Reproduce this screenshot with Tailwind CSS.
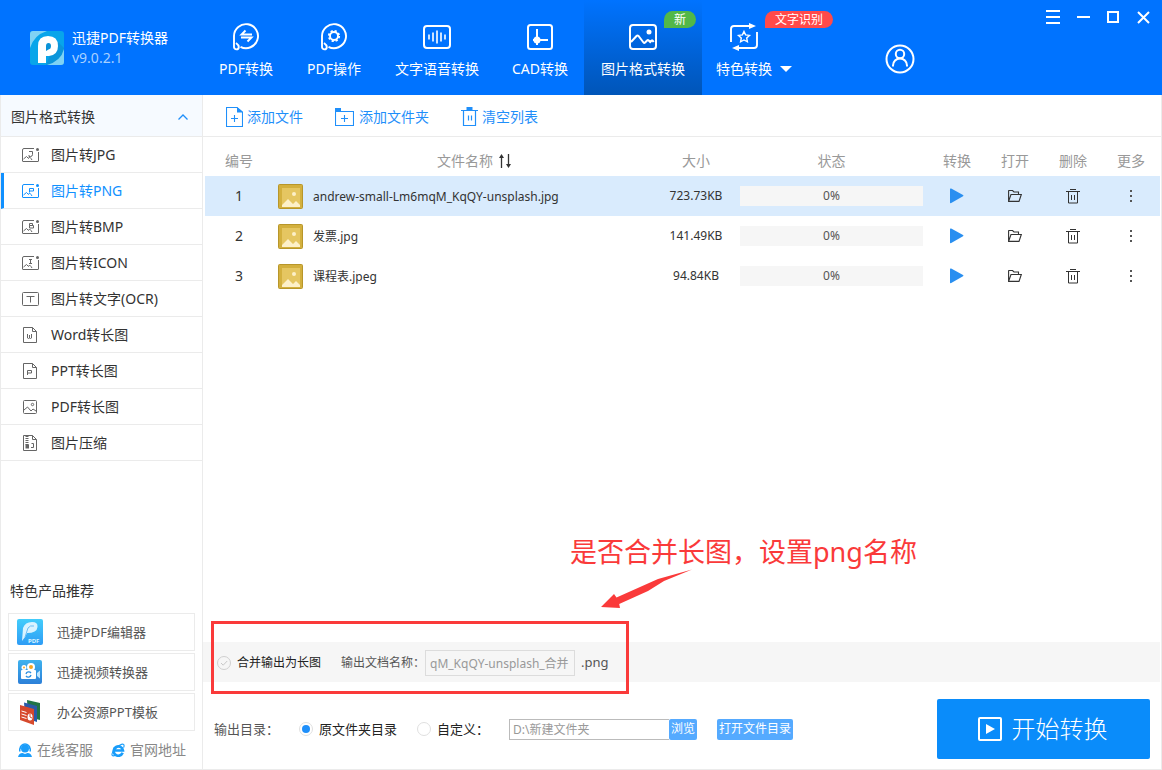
<!DOCTYPE html>
<html lang="zh-CN">
<head>
<meta charset="utf-8">
<meta name="viewport" content="width=device-width, initial-scale=1">
<title>迅捷PDF转换器</title>
<script src="https://cdn.jsdelivr.net/npm/@tailwindcss/browser@4"></script>
</head>
<body class="font-['Noto_Sans','Noto_Sans_CJK_SC',sans-serif] text-sm leading-5 text-[#333] bg-white">
<svg class="hidden" aria-hidden="true">
  <symbol id="pic" viewBox="0 0 25 25">
    <rect x=".5" y=".5" width="24" height="24" rx="1" fill="#d3b03e" stroke="#b8962a"/>
    <rect x="4" y="4" width="18" height="19" fill="#e5c661"/>
    <circle cx="16" cy="10" r="2" fill="#fdf0c8"/>
    <path d="M4 23v-2l6-6 5 5 3-3 4 4v2z" fill="#fdf0c8"/>
  </symbol>
  <symbol id="play" viewBox="0 0 14 16"><path d="M0 1.200Q0 0 1.200.6L13 7q1 .6 0 1.200L1.200 15Q0 15.500 0 14.500z" fill="#2a8ff0"/></symbol>
  <symbol id="open" viewBox="0 0 14 12">
    <path d="M.6 11V1q0-.5.5-.5h3.400l1.500 1.500h4.500v2M.6 11.400L3 4.500h10.300L11 11.400z" fill="none" stroke="#333" stroke-width="1.100"/>
  </symbol>
  <symbol id="bin" viewBox="0 0 14 15">
    <path d="M4 .5h6M0 2.500h14M2.500 3v11h9V3M5.500 6v5M8.500 6v5" fill="none" stroke="#333"/>
  </symbol>
  <symbol id="more" viewBox="0 0 2 14"><path d="M0 1h2v2H0zM0 6h2v2H0zM0 11h2v2H0z" fill="#555"/></symbol>
  <symbol id="frame" viewBox="0 0 18 16">
    <path d="M12 1.500H2Q.5 1.500.5 3v11q0 .5.500.5h15q.5 0 .500-.5V5M1.500 12l3-2.500 2 2 1-1.500 1.500 1.500 1 1.500" fill="none" stroke="currentColor"/>
    <circle cx="15.500" cy="2.500" r="1.500" fill="currentColor"/>
  </symbol>
  <symbol id="doc" viewBox="0 0 18 16">
    <path d="M1.500 .5h9l4 4v11h-13zM10.500 .5v4h4" fill="none" stroke="currentColor"/>
  </symbol>
</svg>

<div class="flex min-h-screen flex-col">
  <header class="flex h-[95px] bg-[#0073ff] text-white">
    <div class="flex w-[202px] shrink-0 items-center gap-2 pl-[30px]">
      <svg class="size-[34px] shrink-0" viewBox="0 0 34 34">
        <rect width="34" height="34" rx="3" fill="#08a5ea"/>
        <path d="M3 0h14Q4 4 0 17V3q0-3 3-3z" fill="#7fd2f4"/>
        <path d="M26 9l8 8v14q0 3-3 3H16z" fill="#0f86c9" opacity=".5"/>
        <path d="M34 18v13q0 3-3 3H17Q31 30 34 18z" fill="#7fd2f4"/>
        <path d="M8 32V15Q8 5 18 5q10 0 10 10 0 9-9 10l-3 0V32z" fill="#fff"/>
        <path d="M16 20v-5q0-3 2.500-3t2.500 3q0 3-2.500 3.500z" fill="#0a93d8"/>
      </svg>
      <div class="leading-5">
        <div>迅捷PDF转换器</div>
        <div class="text-[#a8d0ff]">v9.0.2.1</div>
      </div>
    </div>
    <nav class="flex shrink-0">
      <button class="flex w-[88px] flex-col items-center gap-2 pt-[23px]">
        <svg class="size-7" viewBox="0 0 28 28" fill="none" stroke="#fff" stroke-width="1.900">
          <path d="M2 13a12 12 0 1 1 6.500 10.800M2 13v11a2.400 2.400 0 1 0 4.800 0q0-2-2.800-4"/>
          <path d="M20 11.500H9.500l4-4M9 14.500h10.500l-4 4"/>
        </svg>PDF转换</button>
      <button class="flex w-[88px] flex-col items-center gap-2 pt-[23px]">
        <svg class="size-7" viewBox="0 0 28 28" fill="none" stroke="#fff" stroke-width="1.900">
          <path d="M2 13a12 12 0 1 1 6.500 10.800M2 13v11a2.400 2.400 0 1 0 4.800 0q0-2-2.800-4"/>
          <circle cx="14" cy="13" r="4"/>
          <circle cx="14" cy="13" r="5.200" stroke-width="1.800" stroke-dasharray="2.200 1.883"/>
        </svg>PDF操作</button>
      <button class="flex w-[118px] flex-col items-center gap-2 pt-[23px]">
        <svg class="size-7" viewBox="0 0 28 28" fill="none" stroke="#fff" stroke-width="2">
          <rect x="1" y="3" width="26" height="22" rx="3"/>
          <path d="M6 11.500v5M10 9.500v9M14 7.500v13M18 9.500v9M22 11.500v5" stroke-width="1.600"/>
        </svg>文字语音转换</button>
      <button class="flex w-[88px] flex-col items-center gap-2 pt-[23px]">
        <svg class="size-7" viewBox="0 0 28 28" fill="none" stroke="#fff" stroke-width="2">
          <rect x="2" y="2" width="24" height="24" rx="2.500"/>
          <path d="M11 6v16M7 17h15"/><circle cx="11" cy="17" r="2.500" fill="#fff"/>
        </svg>CAD转换</button>
      <button class="relative flex w-[118px] flex-col items-center gap-2 bg-linear-to-b from-[#0073ff] to-[#0055b8] pt-[23px]">
        <svg class="size-7" viewBox="0 0 28 28" fill="none" stroke="#fff" stroke-width="2">
          <rect x="1" y="2" width="26" height="24" rx="3"/>
          <path d="M2 19l5.500-6q1-1 2 0l5 6.500q.8 1 1.600 0l2-2q.8-.8 1.600 0l1.500 1.500 1.500-1.500q.7-.6 2 1.500"/>
          <circle cx="20" cy="9" r="2.500" fill="#fff" stroke="none"/>
        </svg>图片格式转换
        <span class="absolute left-20 top-[11px] h-[17px] w-8 rounded-full rounded-bl-none bg-[#52b848] text-xs leading-[17px]">新</span></button>
      <button class="relative ml-[14px] flex flex-col gap-2 pt-[23px]">
        <svg class="ml-[14px] size-7" viewBox="0 0 28 28" fill="none" stroke="#fff" stroke-width="1.900">
          <path d="M1 19V6q0-3 3-3h16M27 9v13q0 3-3 3H8"/>
          <path d="M19 0l7 3-7 3zM9 22l-7 3 7 3z" fill="#fff" stroke="none"/>
          <path d="M14 8.500l1.600 3.400 3.900.5-2.800 2.600.7 3.800L14 17l-3.400 1.800.7-3.800-2.800-2.600 3.900-.5z" stroke-width="1.400"/>
        </svg>
        <span class="flex items-center gap-2">特色转换<svg class="h-1.5 w-3" viewBox="0 0 12 6"><path d="M0 0h12L6 6z" fill="#fff"/></svg></span>
        <span class="absolute left-[49px] top-[11px] h-[17px] w-[68px] rounded-full rounded-bl-none bg-[#ff4a4a] text-xs leading-[17px]">文字识别</span></button>
    </nav>
    <button class="ml-[93px] mt-11 size-[30px] shrink-0" aria-label="用户">
      <svg class="size-[30px]" viewBox="0 0 30 30" fill="none" stroke="#fff" stroke-width="2"><circle cx="15" cy="15" r="13.500"/><circle cx="15" cy="10" r="4.200"/><path d="M8 22.500v-1a7 7 0 0 1 14 0v1"/></svg>
    </button>
    <div class="ml-auto flex h-[34px] items-center gap-4 pr-3">
      <button aria-label="菜单"><svg class="size-3.5" viewBox="0 0 14 14"><path d="M0 1h14M0 7h14M0 13h14" stroke="#fff" stroke-width="2"/></svg></button>
      <button aria-label="最小化"><svg class="size-3.5" viewBox="0 0 14 14"><path d="M1 7h13" stroke="#fff" stroke-width="2"/></svg></button>
      <button aria-label="最大化"><svg class="size-3.5" viewBox="0 0 14 14"><path d="M2 2h10v10H2z" fill="none" stroke="#fff" stroke-width="2"/></svg></button>
      <button aria-label="关闭"><svg class="size-3.5" viewBox="0 0 14 14"><path d="M2 2l11 11M13 2L2 13" stroke="#fff" stroke-width="2"/></svg></button>
    </div>
  </header>

  <div class="flex grow border border-t-0 border-[#ebebeb]">
    <aside class="flex w-[202px] shrink-0 flex-col border-r border-[#ebebeb]">
      <button class="flex h-[42px] items-center justify-between border-b border-[#ebebeb] bg-[#f6faff] pl-2.5 pr-[14px] pt-0.5">图片格式转换
        <svg class="h-1.5 w-2.5" viewBox="0 0 10 6"><path d="M.5 5.500L5 1l4.500 4.500" fill="none" stroke="#1f8ffa" stroke-width="1.300"/></svg></button>
      <nav class="text-[#333]">
        <a href="#" class="flex h-9 items-center gap-[11px] border-b border-[#ebebeb] pl-[21px]"><svg class="h-4 w-[18px] text-[#666]" viewBox="0 0 18 16"><use href="#frame"/><path d="M7 4.500h3.500v3q0 2-2 2H7V8" fill="none" stroke="currentColor"/></svg>图片转JPG</a>
        <a href="#" class="flex h-9 items-center gap-[11px] border-b border-l-3 border-b-[#ebebeb] border-l-[#1090ff] pl-[18px] text-[#1090ff]"><svg class="h-4 w-[18px]" viewBox="0 0 18 16"><use href="#frame"/><path d="M7.500 9.500V5.500h4v2.500h-4" fill="none" stroke="currentColor"/></svg>图片转PNG</a>
        <a href="#" class="flex h-9 items-center gap-[11px] border-b border-[#ebebeb] pl-[21px]"><svg class="h-4 w-[18px] text-[#666]" viewBox="0 0 18 16"><use href="#frame"/><path d="M7.500 4.500H10.500v2H7.500zM7.500 6.500H11.500v2.500H7.500z" fill="none" stroke="currentColor"/></svg>图片转BMP</a>
        <a href="#" class="flex h-9 items-center gap-[11px] border-b border-[#ebebeb] pl-[21px]"><svg class="h-4 w-[18px] text-[#666]" viewBox="0 0 18 16"><use href="#frame"/><path d="M7 4.500h3M8.500 4.500v4M7 8.500h3" fill="none" stroke="currentColor"/></svg>图片转ICON</a>
        <a href="#" class="flex h-9 items-center gap-[11px] border-b border-[#ebebeb] pl-[21px]"><svg class="h-4 w-[18px] text-[#666]" viewBox="0 0 18 16"><rect x=".5" y="1.500" width="16" height="13" rx="1" fill="none" stroke="currentColor"/><path d="M4.500 5.500h8M8.500 5.500v6" stroke="currentColor"/></svg>图片转文字(OCR)</a>
        <a href="#" class="flex h-9 items-center gap-[11px] border-b border-[#ebebeb] pl-[21px]"><svg class="h-4 w-[18px] text-[#666]" viewBox="0 0 18 16"><use href="#doc"/><path d="M5.500 7v4l1 .5 1-.5V8v3l1 .5 1-.5V7" fill="none" stroke="currentColor"/></svg>Word转长图</a>
        <a href="#" class="flex h-9 items-center gap-[11px] border-b border-[#ebebeb] pl-[21px]"><svg class="h-4 w-[18px] text-[#666]" viewBox="0 0 18 16"><use href="#doc"/><path d="M5.500 12V7.500h4v2.500h-4" fill="none" stroke="currentColor"/></svg>PPT转长图</a>
        <a href="#" class="flex h-9 items-center gap-[11px] border-b border-[#ebebeb] pl-[21px]"><svg class="h-4 w-[18px] text-[#666]" viewBox="0 0 18 16"><rect x="1.500" y="1.500" width="13" height="13" rx="1" fill="none" stroke="currentColor"/><path d="M2 11l3.500-3 3.500 4 2-2 3 2" fill="none" stroke="currentColor"/><circle cx="10.500" cy="5.500" r="1.200" fill="none" stroke="currentColor"/></svg>PDF转长图</a>
        <a href="#" class="flex h-9 items-center gap-[11px] border-b border-[#ebebeb] pl-[21px]"><svg class="h-4 w-[18px] text-[#666]" viewBox="0 0 18 16"><use href="#doc"/><path d="M5 1v9" stroke="currentColor" stroke-width="3" stroke-dasharray="1 1"/><path d="M3.500 9.500h3.500v4h-3.500z" fill="currentColor"/><path d="M9.500 8.500h2v4H9" fill="none" stroke="currentColor"/></svg>图片压缩</a>
      </nav>
      <div class="mt-auto px-[7px]">
        <h2 class="mb-3 pl-0.5">特色产品推荐</h2>
        <div class="flex flex-col gap-0.5 text-[13px] text-[#555]">
          <a href="#" class="flex h-[38px] items-center gap-[14px] border border-[#ebebeb] pl-2">
            <svg class="size-[26px]" viewBox="0 0 26 26"><defs><linearGradient id="g1" x2="0" y2="1"><stop stop-color="#43cdfb"/><stop offset="1" stop-color="#2e9cf5"/></linearGradient></defs><rect width="26" height="26" rx="2" fill="url(#g1)"/><path d="M5 22L6 9Q8 3 15 3q6 0 5.500 5Q20 14 10 14L8 18z" fill="#d9f3ff"/><path d="M8 18L11 9q2-3 6-2" fill="none" stroke="#6dbdf5"/><text x="11" y="23.500" font-size="6" font-weight="700" fill="#d9f3ff">PDF</text></svg>迅捷PDF编辑器</a>
          <a href="#" class="flex h-[38px] items-center gap-[14px] border border-[#ebebeb] pl-2">
            <svg class="size-[26px]" viewBox="0 0 26 26"><defs><linearGradient id="g2" x2="0" y2="1"><stop stop-color="#3eb2ee"/><stop offset="1" stop-color="#2c7fd8"/></linearGradient></defs><rect x="1" y="1" width="24" height="24" rx="2" fill="url(#g2)"/><rect x="4" y="11" width="15" height="9" rx="1" fill="#fff"/><circle cx="7" cy="8.500" r="2.500" fill="#fff"/><circle cx="14" cy="8" r="4" fill="#fff"/><circle cx="7" cy="8.500" r="1" fill="#f5a623"/><circle cx="14" cy="8" r="2" fill="#f5a623"/><path d="M20 14l3-2.500v8L20 17z" fill="#bfe6ff"/><path d="M9 15a2.800 2.800 0 0 1 5-1M14 16a2.800 2.800 0 0 1-5 1" fill="none" stroke="#2c8fe0" stroke-width="1.300"/></svg>迅捷视频转换器</a>
          <a href="#" class="flex h-[38px] items-center gap-[14px] border border-[#ebebeb] pl-2">
            <svg class="size-[26px]" viewBox="0 0 26 26"><path d="M10 1l13 3v17l-12-3z" fill="#227447"/><path d="M7 3.500L20 7v16L8 19z" fill="#2b5aa8"/><path d="M3 6l14 4v16L3 21z" fill="#d6492c"/><path d="M4.500 12l5 1.500M4.500 15l5 1.500M4.500 18l5 1.500" stroke="#fff"/><ellipse cx="13" cy="18" rx="2.500" ry="3.500" fill="#fff"/><path d="M13 18v-3.500M13 18l2 1" stroke="#d6492c"/></svg>办公资源PPT模板</a>
        </div>
        <div class="flex h-[38px] items-center text-[#888]">
          <a href="#" class="flex items-center gap-[5px] pl-2.5"><svg class="h-[15px] w-[14px]" viewBox="0 0 14 15"><circle cx="7" cy="5.500" r="4" fill="#1a9dfa"/><path d="M2 6a5 5 0 0 1 10 0" fill="none" stroke="#1a9dfa" stroke-width="1.500"/><path d="M1 5.500h1.500v3H1zM11.500 5.500H13v3h-1.500zM0 14q1-4 4.500-4l2.500 1 2.500-1q3.500 0 4.500 4z" fill="#1a9dfa"/></svg>在线客服</a>
          <a href="#" class="flex items-center gap-[5px] pl-[18px]"><svg class="size-[14px]" viewBox="0 0 15 15" fill="none" stroke="#1a9dfa"><path d="M12.500 10.500A5 5 0 1 1 12.800 8H4" stroke-width="2.800"/><path d="M1.500 13.500q-2-2 4-8 6-5.500 8-4 1 1 0 3.500M1.500 13.500q1 .8 4-1" stroke-width="1.200"/></svg>官网地址</a>
        </div>
      </div>
    </aside>

    <main class="flex min-w-0 grow flex-col">
      <div class="flex h-[42px] shrink-0 items-center gap-8 border-b border-[#ebebeb] pl-[23px] pt-0.5 text-[#1f8ffa]">
        <button class="flex items-center gap-1"><svg class="h-5 w-[17px]" viewBox="0 0 17 20"><path d="M.500.500H11L16.500 5v14.500H.500zM5 11.500h7M8.500 8v7" fill="none" stroke="currentColor" stroke-width="1.100"/><path d="M11 0v5.500h6z" fill="currentColor"/></svg>添加文件</button>
        <button class="flex items-center gap-[5px]"><svg class="h-[18px] w-[19px]" viewBox="0 0 19 18"><path d="M.500 3.500h18v14H.500zM6 10.500h7M9.500 7v7" fill="none" stroke="currentColor" stroke-width="1.100"/><path d="M0 0h6v3H0z" fill="currentColor"/></svg>添加文件夹</button>
        <button class="flex items-center gap-1"><svg class="h-[19px] w-[17px]" viewBox="0 0 17 19"><path d="M0 3.500h17M2.500 4v14.500h12V4M7.500 8.500v5M10.500 8.500v5" fill="none" stroke="currentColor" stroke-width="1.200"/><path d="M5.500 0h6v3h-6z" fill="currentColor"/></svg>清空列表</button>
      </div>
      <div class="pl-0.5 pr-px">
        <table class="w-full table-fixed border-collapse">
          <colgroup><col class="w-[68px]"><col><col class="w-[78px]"><col class="w-[193px]"><col class="w-[58px]"><col class="w-[58px]"><col class="w-[58px]"><col class="w-[58px]"></colgroup>
          <thead>
            <tr class="h-[39px] text-[#999] *:p-0 *:pt-2 *:font-normal">
              <th>编号</th>
              <th><div class="flex items-center justify-center gap-1.5 pl-[18px]">文件名称<svg class="h-[14px] w-3" viewBox="0 0 12 14"><path d="M2.500 14V2M9.500 0v12" stroke="#333" stroke-width="1.300"/><path d="M2.500 0L5 4H0zM9.500 14L7 10h5z" fill="#333"/></svg></div></th>
              <th>大小</th><th>状态</th><th>转换</th><th>打开</th><th>删除</th><th>更多</th>
            </tr>
          </thead>
          <tbody class="text-center">
            <tr class="h-10 bg-[#d9ebfd] *:p-0">
              <td>1</td>
              <td><div class="flex items-center gap-2.5 pl-[5px] text-xs"><svg class="size-[25px] shrink-0"><use href="#pic"/></svg><span class="pt-0.5">andrew-small-Lm6mqM_KqQY-unsplash.jpg</span></div></td>
              <td class="text-xs">723.73KB</td>
              <td><div class="mx-[5px] h-5 bg-[#f6f6f6] text-xs leading-5 text-[#555]">0%</div></td>
              <td><button class="block mx-auto" aria-label="转换"><svg class="h-4 w-3.5"><use href="#play"/></svg></button></td>
              <td><button class="block mx-auto" aria-label="打开"><svg class="h-3 w-3.5"><use href="#open"/></svg></button></td>
              <td><button class="block mx-auto" aria-label="删除"><svg class="h-[15px] w-3.5"><use href="#bin"/></svg></button></td>
              <td><button class="block mx-auto" aria-label="更多"><svg class="h-3.5 w-0.5"><use href="#more"/></svg></button></td>
            </tr>
            <tr class="h-10 *:p-0">
              <td>2</td>
              <td><div class="flex items-center gap-2.5 pl-[5px] text-xs"><svg class="size-[25px] shrink-0"><use href="#pic"/></svg><span class="pt-0.5">发票.jpg</span></div></td>
              <td class="text-xs">141.49KB</td>
              <td><div class="mx-[5px] h-5 bg-[#f6f6f6] text-xs leading-5 text-[#555]">0%</div></td>
              <td><button class="block mx-auto" aria-label="转换"><svg class="h-4 w-3.5"><use href="#play"/></svg></button></td>
              <td><button class="block mx-auto" aria-label="打开"><svg class="h-3 w-3.5"><use href="#open"/></svg></button></td>
              <td><button class="block mx-auto" aria-label="删除"><svg class="h-[15px] w-3.5"><use href="#bin"/></svg></button></td>
              <td><button class="block mx-auto" aria-label="更多"><svg class="h-3.5 w-0.5"><use href="#more"/></svg></button></td>
            </tr>
            <tr class="h-10 *:p-0">
              <td>3</td>
              <td><div class="flex items-center gap-2.5 pl-[5px] text-xs"><svg class="size-[25px] shrink-0"><use href="#pic"/></svg><span class="pt-0.5">课程表.jpeg</span></div></td>
              <td class="text-xs">94.84KB</td>
              <td><div class="mx-[5px] h-5 bg-[#f6f6f6] text-xs leading-5 text-[#555]">0%</div></td>
              <td><button class="block mx-auto" aria-label="转换"><svg class="h-4 w-3.5"><use href="#play"/></svg></button></td>
              <td><button class="block mx-auto" aria-label="打开"><svg class="h-3 w-3.5"><use href="#open"/></svg></button></td>
              <td><button class="block mx-auto" aria-label="删除"><svg class="h-[15px] w-3.5"><use href="#bin"/></svg></button></td>
              <td><button class="block mx-auto" aria-label="更多"><svg class="h-3.5 w-0.5"><use href="#more"/></svg></button></td>
            </tr>
          </tbody>
        </table>
      </div>

      <div class="relative mr-px mt-auto flex h-10 shrink-0 items-center bg-[#f6f6f6] pl-[14px] pt-0.5 text-xs">
        <label class="flex items-center gap-1.5 text-[#222]">
          <span class="relative flex size-3.5">
            <input type="checkbox" class="size-3.5 appearance-none rounded-full border border-[#d0d0d0]">
            <svg class="pointer-events-none absolute inset-0 size-3.5" viewBox="0 0 14 14"><path d="M4 7l2.200 2.200L10.200 5" fill="none" stroke="#c8c8c8"/></svg>
          </span>合并输出为长图</label>
        <label for="outname" class="ml-5 text-[#555]">输出文档名称：</label>
        <input id="outname" type="text" value="qM_KqQY-unsplash_合并" class="h-[26px] w-[150px] border border-[#dcdcdc] bg-transparent px-1 text-[#999]">
        <span class="ml-1.5 text-[13px] text-[#555]">.png</span>

        <!-- callout over the merge options -->
        <div class="pointer-events-none absolute -top-[21px] left-2 h-[73px] w-[418px] border-3 border-[#fa3a3a]"></div>
        <svg class="pointer-events-none absolute -top-[74px] left-[397px] h-[41px] w-[94px]" viewBox="0 0 94 41"><path d="M92 1.500L58 11 16.500 29.500 14 26 1 39l19 1-.8-4L48 23 64 13z" fill="#fa3a3a"/></svg>
        <p class="pointer-events-none absolute -top-[108px] left-[367px] whitespace-nowrap text-[27px] leading-9 text-[#fa3a3a]">是否合并长图，设置png名称</p>
      </div>

      <div class="flex h-[87px] shrink-0 items-center pl-[11px] pr-[11px] pt-[7px] text-[13px]">
        <span class="w-[85px] text-[#555]">输出目录：</span>
        <label class="flex items-center gap-1.5 text-[#222]"><input type="radio" name="dir" checked class="size-3.5 appearance-none rounded-full border border-[#e0e0e0] bg-clip-content p-0.5 checked:bg-[#1f8ffa]">原文件夹目录</label>
        <label class="ml-5 flex items-center gap-1.5 text-[#222]"><input type="radio" name="dir" class="size-3.5 appearance-none rounded-full border border-[#e0e0e0] bg-clip-content p-0.5 checked:bg-[#1f8ffa]">自定义：</label>
        <input type="text" aria-label="自定义目录" value="D:\新建文件夹" class="ml-5 h-[21px] w-[160px] border border-r-0 border-[#bbb] px-[3px] text-xs text-[#999]">
        <button class="h-[21px] w-7 rounded-xs bg-[#55aaff] text-xs text-white">浏览</button>
        <button class="ml-5 h-[21px] w-[76px] rounded-xs bg-[#55aaff] text-xs text-white">打开文件目录</button>
        <button class="ml-auto flex h-[60px] w-[213px] items-center justify-center gap-2.5 rounded-xs bg-[#0a8cfa] pr-0.5 text-2xl font-light text-white">
          <svg class="size-6" viewBox="0 0 24 24"><rect x="1" y="1" width="22" height="22" rx="1" fill="none" stroke="#fff" stroke-width="2"/><path d="M8 7l9 5-9 5z" fill="#fff"/></svg>开始转换</button>
      </div>
    </main>
  </div>
</div>
</body>
</html>
